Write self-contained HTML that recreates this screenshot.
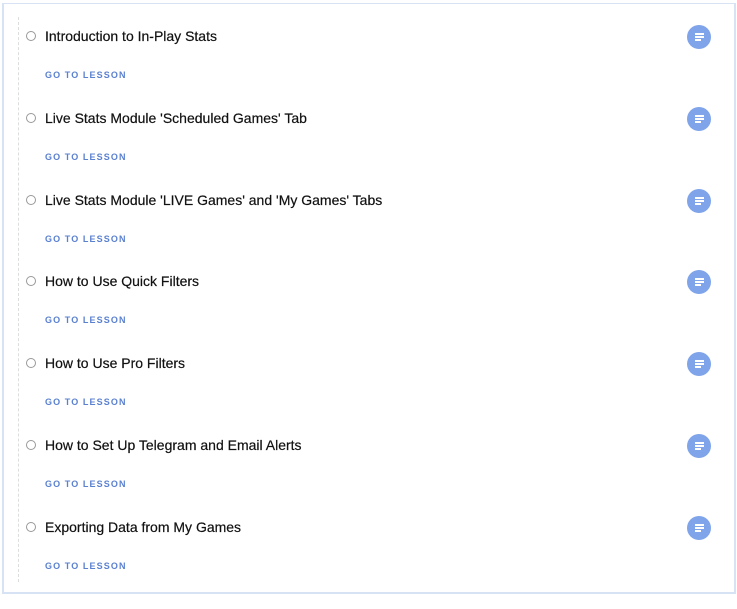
<!DOCTYPE html>
<html><head><style>
body{margin:0;width:737px;height:597px;background:#fff;font-family:"Liberation Sans",sans-serif;position:relative;overflow:hidden}
.box{position:absolute;left:2px;top:3px;width:730px;height:588px;border:1px solid #d7e2f5;border-width:1px 2px 2px 2px}
.line{position:absolute;left:18px;top:17px;height:565px;border-left:1px dashed #ddd}
.it{position:absolute;left:0;width:737px;height:82px}
.c{position:absolute;left:26px;top:-5px;width:8px;height:8px;border:1px solid #999;border-radius:50%}
.t{position:absolute;left:45px;top:-8px;font-size:14px;color:#111;white-space:nowrap;-webkit-text-stroke:0.2px #111}
.g{position:absolute;left:45px;top:34px;font-size:9px;font-weight:bold;letter-spacing:1.1px;color:#5a80d0}
.i{position:absolute;left:687px;top:-11px;width:24px;height:24px;border-radius:50%;background:#7fa4ea}
.i b{position:absolute;left:8px;height:1.5px;background:#fff;width:9px}
</style></head><body>
<div class="box"></div><div class="line"></div>
<div class="it" style="top:36px"><div class="c"></div><div class="t">Introduction to In-Play Stats</div><div class="g">GO TO LESSON</div><div class="i"><b style="top:8px"></b><b style="top:11px"></b><b style="top:14px;width:6px"></b></div></div>
<div class="it" style="top:118px"><div class="c"></div><div class="t">Live Stats Module 'Scheduled Games' Tab</div><div class="g">GO TO LESSON</div><div class="i"><b style="top:8px"></b><b style="top:11px"></b><b style="top:14px;width:6px"></b></div></div>
<div class="it" style="top:200px"><div class="c"></div><div class="t">Live Stats Module 'LIVE Games' and 'My Games' Tabs</div><div class="g">GO TO LESSON</div><div class="i"><b style="top:8px"></b><b style="top:11px"></b><b style="top:14px;width:6px"></b></div></div>
<div class="it" style="top:281px"><div class="c"></div><div class="t">How to Use Quick Filters</div><div class="g">GO TO LESSON</div><div class="i"><b style="top:8px"></b><b style="top:11px"></b><b style="top:14px;width:6px"></b></div></div>
<div class="it" style="top:363px"><div class="c"></div><div class="t">How to Use Pro Filters</div><div class="g">GO TO LESSON</div><div class="i"><b style="top:8px"></b><b style="top:11px"></b><b style="top:14px;width:6px"></b></div></div>
<div class="it" style="top:445px"><div class="c"></div><div class="t">How to Set Up Telegram and Email Alerts</div><div class="g">GO TO LESSON</div><div class="i"><b style="top:8px"></b><b style="top:11px"></b><b style="top:14px;width:6px"></b></div></div>
<div class="it" style="top:527px"><div class="c"></div><div class="t">Exporting Data from My Games</div><div class="g">GO TO LESSON</div><div class="i"><b style="top:8px"></b><b style="top:11px"></b><b style="top:14px;width:6px"></b></div></div>
</body></html>
